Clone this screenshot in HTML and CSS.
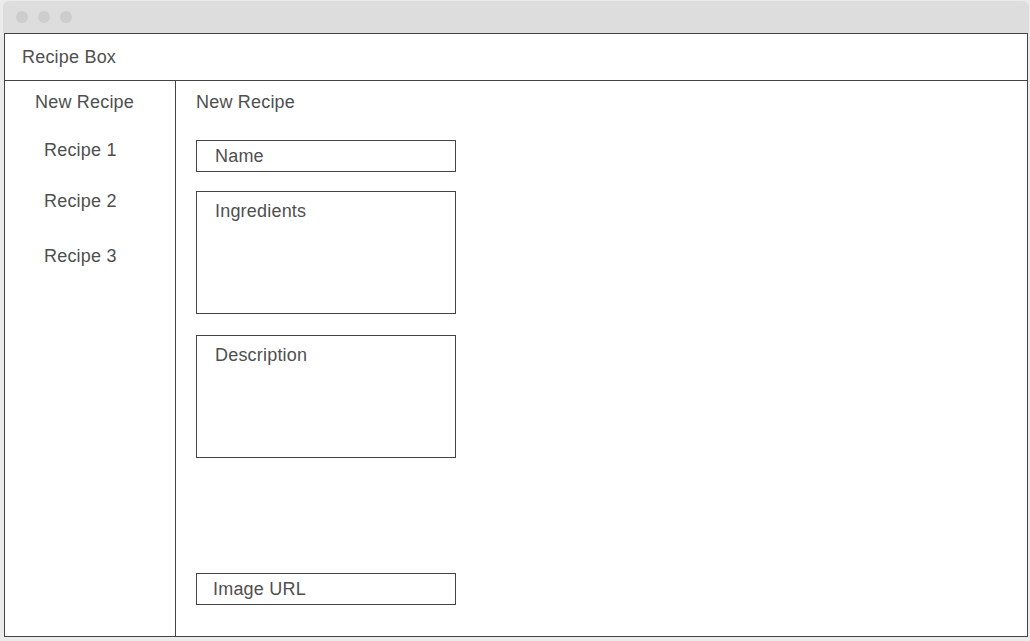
FILE: index.html
```html
<!DOCTYPE html>
<html>
<head>
<meta charset="utf-8">
<link rel="stylesheet" href="styles.css">
</head>
<body>
<div class="titlebar">
  <span class="dot"></span><span class="dot"></span><span class="dot"></span>
</div>
<div class="frame">
  <div class="header">Recipe Box</div>
  <div class="content">
    <div class="sidebar">
      <div class="side-item new">New Recipe</div>
      <div class="side-item r1">Recipe 1</div>
      <div class="side-item r2">Recipe 2</div>
      <div class="side-item r3">Recipe 3</div>
    </div>
    <div class="main">
      <div class="main-title">New Recipe</div>
      <div class="field name">Name</div>
      <div class="field area ingredients">Ingredients</div>
      <div class="field area description">Description</div>
      <div class="field url">Image URL</div>
    </div>
  </div>
</div>
</body>
</html>
```
FILE: styles.css
```css
html, body {
  margin: 0;
  padding: 0;
}
body {
  width: 1030px;
  height: 641px;
  background: #ebebeb;
  font-family: "Liberation Sans", Arial, sans-serif;
  font-size: 18px;
  letter-spacing: 0.2px;
  color: #4f4f4f;
  overflow: hidden;
}
.titlebar {
  margin: 1px 1px 0 3px;
  height: 32px;
  background: #dddddd;
  border-radius: 6px 6px 0 0;
  display: flex;
  align-items: center;
  gap: 10px;
  padding-left: 13px;
  box-sizing: border-box;
}
.dot {
  width: 12px;
  height: 12px;
  border-radius: 50%;
  background: #cdcdcd;
}
.frame {
  margin-left: 4px;
  width: 1024px;
  height: 604px;
  box-sizing: border-box;
  border: 1px solid #444;
  background: #fff;
  display: flex;
  flex-direction: column;
}
.header {
  height: 47px;
  box-sizing: border-box;
  border-bottom: 1px solid #444;
  padding-left: 17px;
  line-height: 46px;
}
.content {
  flex: 1;
  display: flex;
}
.sidebar {
  width: 171px;
  box-sizing: border-box;
  border-right: 1px solid #444;
  display: flex;
  flex-direction: column;
  padding-top: 11px;
}
.side-item {
  line-height: 20px;
  padding-left: 39px;
}
.side-item.new {
  padding-left: 30px;
}
.side-item.r1 { margin-top: 28px; }
.side-item.r2 { margin-top: 31px; }
.side-item.r3 { margin-top: 35px; }
.main {
  flex: 1;
  padding: 11px 0 0 20px;
  display: flex;
  flex-direction: column;
  align-items: flex-start;
}
.main-title {
  line-height: 20px;
}
.field {
  width: 260px;
  box-sizing: border-box;
  border: 1px solid #444;
  padding-left: 18px;
  line-height: 20px;
}
.field.name {
  margin-top: 28px;
  height: 32px;
  padding-top: 5px;
}
.field.area {
  height: 123px;
  padding-top: 9px;
}
.field.ingredients { margin-top: 19px; }
.field.description { margin-top: 21px; }
.field.url {
  margin-top: 115px;
  height: 32px;
  padding-top: 5px;
  padding-left: 16px;
}
```
